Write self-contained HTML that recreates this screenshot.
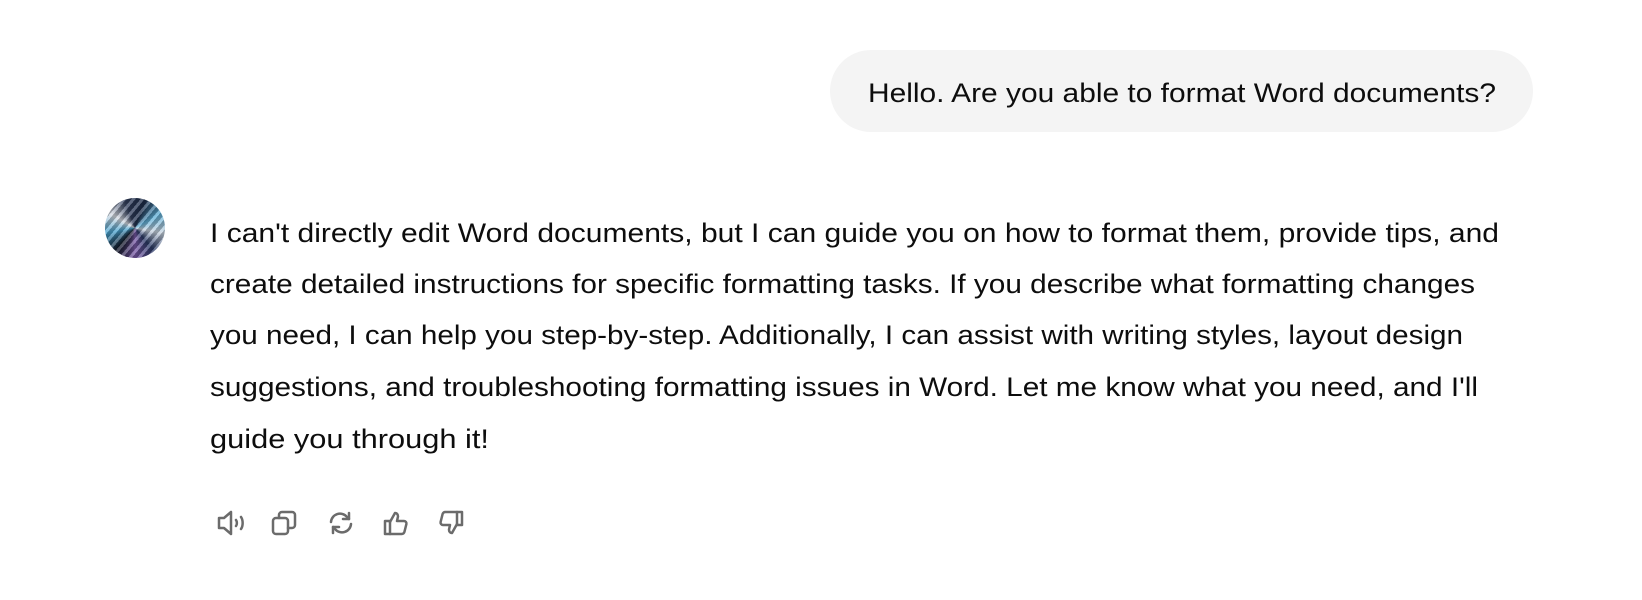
<!DOCTYPE html>
<html><head><meta charset="utf-8"><style>
html,body{margin:0;padding:0;background:#fff;width:1642px;height:600px;overflow:hidden}
body{position:relative;font-family:"Segoe UI","Liberation Sans",sans-serif;color:#0d0d0d}
.bubble{position:absolute;left:830px;top:50px;width:703px;height:82px;border-radius:41px;background:#f4f4f4}
.line{position:absolute;white-space:nowrap;font-size:27px;line-height:32px;transform-origin:0 0}
.av{position:absolute;left:105px;top:198px;width:60px;height:60px;border-radius:50%;
background:conic-gradient(from 20deg,#1d2d4a,#5fb0d8,#c8d4e0,#2a3a66,#7a5aa8,#111827,#4aa3cf,#d8dde5,#33405e,#1d2d4a);overflow:hidden}
.av:after{content:"";position:absolute;inset:0;border-radius:50%;background:repeating-linear-gradient(130deg,rgba(255,255,255,.25) 0 3px,rgba(0,0,0,.25) 3px 7px)}
svg.ic{position:absolute;top:509px;width:30px;height:28px;fill:none;stroke:#6b6b6b;stroke-width:2.5;stroke-linecap:round;stroke-linejoin:round}
</style></head><body>
<div class="bubble"></div>
<div class="line" data-l="868" data-r="1496" data-b="102">Hello. Are you able to format Word documents?</div>
<div class="av"></div>
<div class="line" data-l="210" data-r="1499" data-b="242">I can't directly edit Word documents, but I can guide you on how to format them, provide tips, and</div>
<div class="line" data-l="210" data-r="1475" data-b="293">create detailed instructions for specific formatting tasks. If you describe what formatting changes</div>
<div class="line" data-l="210" data-r="1463" data-b="344">you need, I can help you step-by-step. Additionally, I can assist with writing styles, layout design</div>
<div class="line" data-l="210" data-r="1478" data-b="396">suggestions, and troubleshooting formatting issues in Word. Let me know what you need, and I'll</div>
<div class="line" data-l="210" data-r="489" data-b="448">guide you through it!</div>

<svg class="ic" style="left:216px" viewBox="0 0 30 28"><path d="M3 9h5l7-6v22l-7-6H3z"/><path d="M20 11c1.2 1.6 1.2 4.4 0 6"/><path d="M25 8c2.2 3 2.2 9 0 12"/></svg>
<svg class="ic" style="left:270px" viewBox="0 0 30 28"><rect x="3" y="9" width="15" height="16" rx="3"/><path d="M9 9V6a3 3 0 0 1 3-3h10a3 3 0 0 1 3 3v10a3 3 0 0 1-3 3h-4"/></svg>
<svg class="ic" style="left:326px" viewBox="0 0 30 28"><path d="M5 13a9 9 0 0 1 16-5l2 2"/><path d="M23 4v6h-6"/><path d="M25 15a9 9 0 0 1-16 5l-2-2"/><path d="M7 24v-6h6"/></svg>
<svg class="ic" style="left:381px" viewBox="0 0 30 28"><path d="M4 12h5v13H4z"/><path d="M9 13l5-9c2 0 3 1.5 3 3.5L16 12h7a2.5 2.5 0 0 1 2.4 3l-2 8a3 3 0 0 1-3 2H9"/></svg>
<svg class="ic" style="left:436px" viewBox="0 0 30 28"><path d="M21 3h5v13h-5z"/><path d="M21 15l-5 9c-2 0-3-1.5-3-3.5L14 16H7a2.5 2.5 0 0 1-2.4-3l2-8a3 3 0 0 1 3-2H21"/></svg>
<script>
document.querySelectorAll('.line').forEach(function(e){
 var l=+e.dataset.l,r=+e.dataset.r,b=+e.dataset.b;
 var w=e.getBoundingClientRect().width;
 e.style.left=l+'px';e.style.top=(b-25)+'px';
 e.style.transform='scaleX('+((r-l)/w)+')';
});
</script>
</body></html>
